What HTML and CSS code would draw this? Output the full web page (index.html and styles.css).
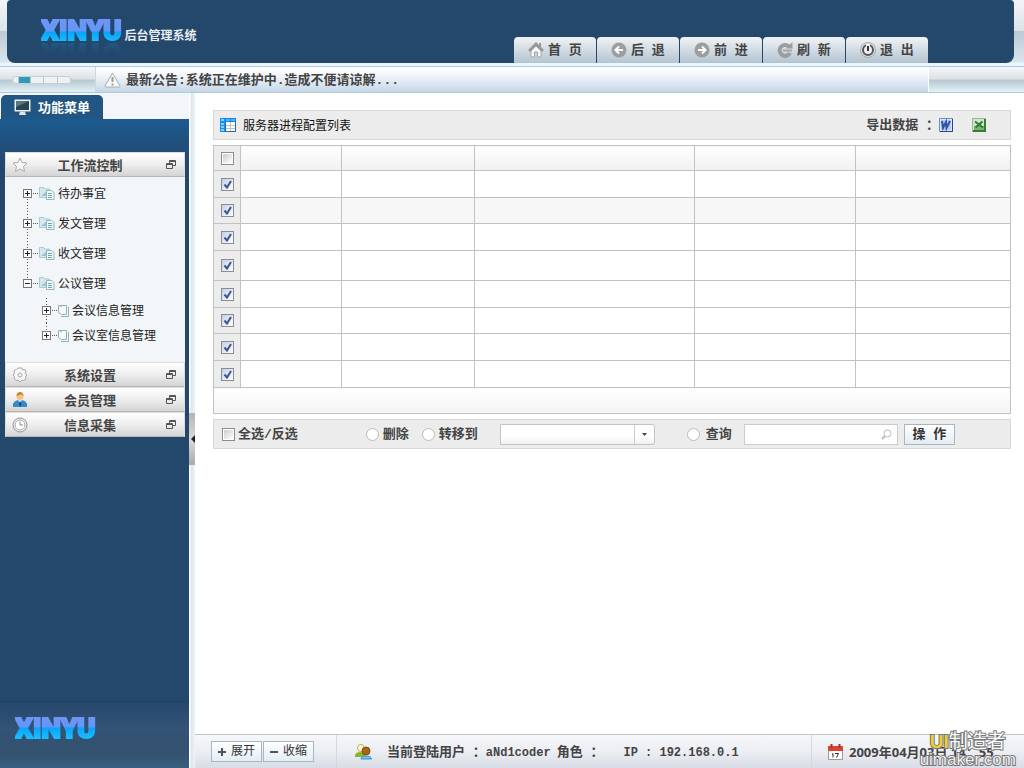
FILE: index.html
```html
<!DOCTYPE html>
<html lang="zh-CN">
<head>
<meta charset="utf-8">
<title>后台管理系统</title>
<link rel="stylesheet" href="styles.css">
</head>
<body>
<header class="top">
  <div class="banner">
    <div class="brand"><span class="logo">XINYU</span><h1>后台管理系统</h1></div>
    <nav class="nav">
      <a href="#home"><svg width="16" height="16" viewBox="0 0 16 16"><path d="M8 0 0 8l2 2 6-6 6 6 2-2-3-3V1h-2v2z" fill="#999"/><path d="M3 9l5-5 5 5v6H9.500v-5h-3v5H3z" fill="#f8f8f8" stroke="#a5a5a5"/></svg><span>首 页</span></a>
      <a href="#back"><svg width="16" height="16" viewBox="0 0 16 16"><circle cx="8" cy="8" r="7.500" fill="#9b9d9f"/><path d="M12 8H5M8 4.500 4.500 8 8 11.500" fill="none" stroke="#fff" stroke-width="2"/></svg><span>后 退</span></a>
      <a href="#forward"><svg width="16" height="16" viewBox="0 0 16 16"><circle cx="8" cy="8" r="7.500" fill="#9b9d9f"/><path d="M4 8h7M8 4.500l3.500 3.500L8 11.500" fill="none" stroke="#fff" stroke-width="2"/></svg><span>前 进</span></a>
      <a href="#refresh"><svg width="16" height="16" viewBox="0 0 16 16"><path d="M12 4.500A5.500 5.500 0 1 0 13 11" fill="none" stroke="#9b9d9f" stroke-width="4"/><path d="M15.500 0v6.500H9z" fill="#9b9d9f"/><path d="M6 8.500h9" stroke="#a5a7a9" stroke-width="2"/></svg><span>刷 新</span></a>
      <a href="#exit"><svg width="16" height="16" viewBox="0 0 16 16"><circle cx="8" cy="8" r="7.500" fill="#ddd" stroke="#aaa"/><circle cx="8" cy="8" r="5" fill="#eee" stroke="#555" stroke-width="2"/><path d="M8 2v3" stroke="#eee" stroke-width="4"/><path d="M8 4v5" stroke="#333" stroke-width="2"/></svg><span>退 出</span></a>
    </nav>
  </div>
</header>
<div class="strip">
  <div class="strip-left"><div class="meter"><i></i><i></i><i></i><i></i><i></i></div></div>
  <div class="notice">
    <svg width="17" height="16" viewBox="0 0 17 16"><path d="M8.500 1 1 14q0 1 1 1h13q1 0 1-1z" fill="#fafafa" stroke="#aaa" stroke-linejoin="round"/><path d="M8.500 5v5M8.500 11.500v2" stroke="#999" stroke-width="2"/></svg>
    <p>最新公告:系统正在维护中.造成不便请谅解...</p>
  </div>
  <div class="strip-right"></div>
</div>
<div class="layout">
  <aside class="side">
    <div class="tabs"><div class="tab">
      <svg width="17" height="17" viewBox="0 0 17 17"><path d="M.5.5h16v12H.5z" fill="#e9eff2"/><path d="M2 2h13v9H2z" fill="#27464f"/><path d="M2 2h13L2 8z" fill="#58777d"/><path d="M6 12.500h5l1 3.500H5z" fill="#dfe6ea"/></svg>
      <h2>功能菜单</h2></div></div>
    <div class="side-body">
      <div class="menu">
        <button class="group"><svg width="16" height="16" viewBox="0 0 16 16"><path d="M8 1l2 4.500 5 .5-3.500 3.500 1 5L8 12l-4.500 2.500 1-5L1 6l5-.5z" fill="#f6f6f6" stroke="#aaa" stroke-linejoin="round"/></svg><span>工作流控制</span><svg class="win" width="10" height="9" viewBox="0 0 10 9"><path d="M3.500 4V.5h6v5H7M3.500 1.500h6M.5 3.500h6v5h-6zM.5 4.500h6" fill="none" stroke="#555"/></svg></button>
        <ul class="tree">
          <li><div class="node"><button class="exp" aria-label="展开"></button><i class="dots"></i><svg width="16" height="14" viewBox="0 0 16 14"><path d="M.5 11.500v-10h4l1 1.500h5v8.500z" fill="#d5e9ee" stroke="#a4cbd5"/><path d="M2 10l6-5v5z" fill="#9fc2d0"/><path d="M7.500 4.500h5l2.500 2v7H7.500z" fill="#f5fafa" stroke="#8fb8bd"/><path d="M9 7.500h4M9 9.500h4M9 11.500h4" stroke="#6fa6a8"/></svg><a href="#todo">待办事宜</a></div></li>
          <li><div class="node"><button class="exp" aria-label="展开"></button><i class="dots"></i><svg width="16" height="14" viewBox="0 0 16 14"><path d="M.5 11.500v-10h4l1 1.500h5v8.500z" fill="#d5e9ee" stroke="#a4cbd5"/><path d="M2 10l6-5v5z" fill="#9fc2d0"/><path d="M7.500 4.500h5l2.500 2v7H7.500z" fill="#f5fafa" stroke="#8fb8bd"/><path d="M9 7.500h4M9 9.500h4M9 11.500h4" stroke="#6fa6a8"/></svg><a href="#out">发文管理</a></div></li>
          <li><div class="node"><button class="exp" aria-label="展开"></button><i class="dots"></i><svg width="16" height="14" viewBox="0 0 16 14"><path d="M.5 11.500v-10h4l1 1.500h5v8.500z" fill="#d5e9ee" stroke="#a4cbd5"/><path d="M2 10l6-5v5z" fill="#9fc2d0"/><path d="M7.500 4.500h5l2.500 2v7H7.500z" fill="#f5fafa" stroke="#8fb8bd"/><path d="M9 7.500h4M9 9.500h4M9 11.500h4" stroke="#6fa6a8"/></svg><a href="#in">收文管理</a></div></li>
          <li><div class="node"><button class="exp open" aria-label="收缩"></button><i class="dots"></i><svg width="16" height="14" viewBox="0 0 16 14"><path d="M.5 11.500v-10h4l1 1.500h5v8.500z" fill="#d5e9ee" stroke="#a4cbd5"/><path d="M2 10l6-5v5z" fill="#9fc2d0"/><path d="M7.500 4.500h5l2.500 2v7H7.500z" fill="#f5fafa" stroke="#8fb8bd"/><path d="M9 7.500h4M9 9.500h4M9 11.500h4" stroke="#6fa6a8"/></svg><a href="#meeting">公议管理</a></div>
            <ul class="subtree">
              <li><div class="node"><button class="exp" aria-label="展开"></button><i class="dots"></i><svg width="11" height="12" viewBox="0 0 11 12"><path d="M3 2.500V.5M3 11.500h7.500V2M.5.500h8v9h-5l-3-2z" fill="#f6fafa" stroke="#8fb0b4"/></svg><a href="#info">会议信息管理</a></div></li>
              <li><div class="node"><button class="exp" aria-label="展开"></button><i class="dots"></i><svg width="11" height="12" viewBox="0 0 11 12"><path d="M3 2.500V.5M3 11.500h7.500V2M.5.500h8v9h-5l-3-2z" fill="#f6fafa" stroke="#8fb0b4"/></svg><a href="#room">会议室信息管理</a></div></li>
            </ul>
          </li>
        </ul>
        <button class="group"><svg width="16" height="16" viewBox="0 0 16 16"><path d="M6 1h4l.5 2L13 2.500 14 5l-1 1.500 2 1.500-1.500 2 .5 2-2.500 1.500-1.500-.5L8 15l-2-2-2 .5L2 11l.5-1.500L1 8l1.500-2L2 3.500 4.500 2.500z" fill="#f6f6f6" stroke="#aaa"/><circle cx="8" cy="8" r="2" fill="none" stroke="#aaa"/></svg><span>系统设置</span><svg class="win" width="10" height="9" viewBox="0 0 10 9"><path d="M3.500 4V.5h6v5H7M3.500 1.500h6M.5 3.500h6v5h-6zM.5 4.500h6" fill="none" stroke="#555"/></svg></button>
        <button class="group"><svg width="16" height="16" viewBox="0 0 16 16"><path d="M1 15v-3q1-3 5-4h4q4 1 5 4v3z" fill="#328ac8"/><path d="M6 8h4l-2 3z" fill="#d4ecfa"/><path d="M8 9l1.500 3L8 15l-1-3z" fill="#15416c"/><circle cx="8" cy="4.500" r="3.500" fill="#f3c583"/><path d="M4.500 4q0-4 3.500-4t3.500 4l-2-1.500z" fill="#c68a3b"/></svg><span>会员管理</span><svg class="win" width="10" height="9" viewBox="0 0 10 9"><path d="M3.500 4V.5h6v5H7M3.500 1.500h6M.5 3.500h6v5h-6zM.5 4.500h6" fill="none" stroke="#555"/></svg></button>
        <button class="group"><svg width="16" height="16" viewBox="0 0 16 16"><circle cx="8" cy="8" r="7" fill="#eee" stroke="#999"/><circle cx="8" cy="8" r="5" fill="#fff" stroke="#aaa"/><path d="M8 4.500V8h3" fill="none" stroke="#888"/></svg><span>信息采集</span><svg class="win" width="10" height="9" viewBox="0 0 10 9"><path d="M3.500 4V.5h6v5H7M3.500 1.500h6M.5 3.500h6v5h-6zM.5 4.500h6" fill="none" stroke="#555"/></svg></button>
      </div>
    </div>
    <div class="side-foot"><span class="logo">XINYU</span></div>
  </aside>
  <div class="splitter"><button class="handle" aria-label="收起菜单"><svg width="4" height="8" viewBox="0 0 4 8"><path d="M4 0v8L0 4z" fill="#222"/></svg></button></div>
  <div class="right">
    <main class="content">
      <div class="bar">
        <svg width="16" height="14" viewBox="0 0 16 14"><path d="M0 0h16v14H0z" fill="#2b69ad"/><path d="M0 0h16v4H0z" fill="#1581ea"/><path d="M0 0h5v14H0z" fill="#1690f4"/><path d="M1 5h3v2H1zm0 3h3v2H1zm0 3h3v2H1zM1 1h3v2H1z" fill="#7fd0ff"/><path d="M6 1h4v2H6zm5 0h4v2h-4z" fill="#53b4ff"/><path d="M6 4h9v9H6z" fill="#fff"/><path d="M6 7.500h9M6 10.500h9M10.500 4v9" stroke="#b9c3cc"/></svg>
        <h3>服务器进程配置列表</h3>
        <div class="export"><span>导出数据 ：</span>
          <button aria-label="Word"><svg width="14" height="14" viewBox="0 0 14 14"><path d="M.5.500h13v13H.5z" fill="#dce7fa" stroke="#6d8cc8"/><path d="M2 2h10v10H2z" fill="#b9cdf2"/><path d="M3 3l1 7 3-6 .5 6L11 3" fill="none" stroke="#2f55ab" stroke-width="2"/><path d="M13.500 1v12.500H1" fill="none" stroke="#27458b"/></svg></button>
          <button aria-label="Excel"><svg width="14" height="14" viewBox="0 0 14 14"><path d="M.5.500h13v13H.5z" fill="#cde5c8" stroke="#8fbf89"/><path d="M2 8h10v4H2z" fill="#79b472"/><path d="M3 3.500l8 6M10.500 3.500l-7 6" stroke="#2f7a32" stroke-width="2"/><path d="M13 1v12H1" fill="none" stroke="#3b7a3c" stroke-width="2"/></svg></button>
        </div>
      </div>
      <table class="grid">
        <colgroup><col class="c0"><col class="c1"><col class="c2"><col class="c3"><col class="c4"><col></colgroup>
        <thead><tr><th><input type="checkbox" aria-label="全选"></th><th></th><th></th><th></th><th></th><th></th></tr></thead>
        <tbody>
          <tr><td><input type="checkbox" checked aria-label="第1行"></td><td></td><td></td><td></td><td></td><td></td></tr>
          <tr class="alt"><td><input type="checkbox" checked aria-label="第2行"></td><td></td><td></td><td></td><td></td><td></td></tr>
          <tr><td><input type="checkbox" checked aria-label="第3行"></td><td></td><td></td><td></td><td></td><td></td></tr>
          <tr class="tall"><td><input type="checkbox" checked aria-label="第4行"></td><td></td><td></td><td></td><td></td><td></td></tr>
          <tr><td><input type="checkbox" checked aria-label="第5行"></td><td></td><td></td><td></td><td></td><td></td></tr>
          <tr class="short"><td><input type="checkbox" checked aria-label="第6行"></td><td></td><td></td><td></td><td></td><td></td></tr>
          <tr><td><input type="checkbox" checked aria-label="第7行"></td><td></td><td></td><td></td><td></td><td></td></tr>
          <tr><td><input type="checkbox" checked aria-label="第8行"></td><td></td><td></td><td></td><td></td><td></td></tr>
        </tbody>
        <tfoot><tr><td colspan="6"></td></tr></tfoot>
      </table>
      <form class="bar actions">
        <label class="all"><input type="checkbox"><span>全选/反选</span></label>
        <label class="del"><input type="radio" name="op"><span>删除</span></label>
        <label class="move"><input type="radio" name="op"><span>转移到</span></label>
        <select aria-label="转移到"><option></option></select>
        <label class="find"><input type="radio" name="op"><span>查询</span></label>
        <input class="search" type="text" aria-label="查询">
        <button class="btn go" type="button">操 作</button>
      </form>
    </main>
    <footer class="foot">
      <div class="foot-btns">
        <button class="btn"><svg width="8" height="8" viewBox="0 0 8 8"><path d="M0 4h8M4 0v8" stroke="#4a5563" stroke-width="2"/></svg>展开</button>
        <button class="btn"><svg width="8" height="8" viewBox="0 0 8 8"><path d="M0 4h8" stroke="#4a5563" stroke-width="2"/></svg>收缩</button>
      </div>
      <div class="user">
        <svg width="17" height="16" viewBox="0 0 17 16"><path d="M0 11q1-3 5-3t5 3v2H0z" fill="#8db52c"/><circle cx="6" cy="4" r="3.500" fill="#fffbe0" stroke="#c8a347"/><circle cx="11" cy="7" r="4" fill="#a9680f" stroke="#7f4e10"/><path d="M6 15q0-3 5-3t5.500 3z" fill="#6cc6f2" stroke="#3a93cc"/></svg>
        <span>当前登陆用户 ：</span><span class="mono name">aNd1coder</span><span class="role">角色 ：</span><span class="mono">IP : 192.168.0.1</span>
      </div>
      <div class="date">
        <svg width="15" height="16" viewBox="0 0 15 16"><path d="M.5 4h14v11.500H.5z" fill="#fff" stroke="#999"/><path d="M0 2h15v5H0z" fill="#d8462f"/><path d="M3.500 0v4M11.500 0v4" stroke="#a33" stroke-width="2"/><path d="M5 9.500v4M4 10h1M7 9.500h3.500L8.500 13.500" fill="none" stroke="#333"/></svg>
        <time datetime="2009-04-03T14:55">2009年04月03日 14：55</time>
      </div>
    </footer>
  </div>
</div>
<div class="mark"><div class="mark-top"><b>UI</b>制造者</div><div class="mark-url">uimaker.com</div></div>
</body>
</html>
```
FILE: styles.css
```css
* { box-sizing: border-box; }
body {
  margin: 0;
  min-height: 100vh;
  display: flex;
  flex-direction: column;
  font-family: "Liberation Sans", "Noto Sans CJK SC", sans-serif;
  font-size: 13px;
  line-height: 20px;
  color: #444;
  background: #fff;
}
h1, h2, h3, p, ul { margin: 0; padding: 0; font-size: inherit; }
ul { list-style: none; }
a { color: inherit; text-decoration: none; }
button, input, select { font: inherit; color: inherit; margin: 0; }
svg { flex: none; display: block; }

.top {
  padding: 0 10px 3px 7px;
  background: linear-gradient(#f2f5f6, #dbe3ea 31px, #bcc8d4 31px, #dbe5ee 62px, #e8f6ff 63px);
}
.banner {
  display: flex;
  justify-content: space-between;
  height: 63px;
  padding: 0 86px 0 34px;
  background: #24476c;
  border-radius: 4px 4px 8px 8px;
}
.brand { display: flex; align-items: flex-start; gap: 3px; padding-top: 16px; }
.brand h1 { padding-top: 10px; font-size: 12px; color: #e8eef4; }
.logo {
  font-family: Roboto, sans-serif;
  font-weight: 900;
  font-size: 28px;
  line-height: 30px;
  color: transparent;
  background: linear-gradient(#6e95f5 5px, #6297f8 15px, #08a4fb 16px, #1bbcff 26px);
  background-clip: text;
  -webkit-background-clip: text;
  -webkit-text-stroke: 2px transparent;
  -webkit-box-reflect: below -8px linear-gradient(transparent 40%, rgba(0, 0, 0, .2));
}
.nav { display: flex; gap: 1px; align-items: flex-end; }
.nav a {
  display: flex;
  align-items: center;
  gap: 4px;
  width: 82px;
  height: 26px;
  padding-left: 14px;
  font-weight: bold;
  background: linear-gradient(#f0f3f5, #b3c4d1);
  border-radius: 4px 4px 0 0;
}
.nav a, .notice, .export, .actions, .foot {
  font-family: "Liberation Mono", "Noto Sans CJK SC", monospace;
}
.nav span, .notice p, .tab h2, .export span, .actions span, .user span { padding-top: 2px; }

.strip {
  display: flex;
  height: 27px;
  border-top: 1px solid #b3c8d6;
  border-bottom: 1px solid #b3c8d6;
}
.strip-left, .strip-right {
  width: 95px;
  background: linear-gradient(#f5f6f7, #dde2e7 12px, #b8c8d1 13px, #e1f2f8);
}
.strip-left { display: flex; align-items: center; padding-left: 12px; }
.meter { display: flex; width: 60px; height: 8px; border: 1px solid #c5cfd4; border-radius: 4px; background: #edf1f3; overflow: hidden; }
.meter i { width: 15px; border-right: 1px solid #b9c4ca; }
.meter i:first-child { width: 7px; }
.meter i:nth-child(2) { background: #2b9dba; width: 13px; }
.notice {
  flex: 1;
  display: flex;
  align-items: center;
  gap: 5px;
  padding-left: 8px;
  font-weight: bold;
  background: linear-gradient(#fff, #f4f7fb 30%, #c5d7e8);
  border-left: 1px solid #c9d8e3;
  border-right: 1px solid #fff;
}

.layout { flex: 1; display: flex; }
.side { width: 189px; display: flex; flex-direction: column; background: #24476c; }
.tabs { height: 26px; padding: 2px 0 0 1px; background: #f4f5f9; }
.tab {
  display: flex;
  align-items: center;
  gap: 7px;
  width: 102px;
  height: 24px;
  padding-left: 13px;
  color: #fff;
  background: #215582;
  border-radius: 5px 5px 0 0;
}
.side-body { flex: 1; padding: 33px 4px 0 5px; background: linear-gradient(#1c5b90, #24476c 45px); }
.menu { background: #f2f6f9; }
.group {
  display: grid;
  grid-template-columns: 16px 1fr 10px;
  align-items: center;
  width: 100%;
  height: 25px;
  padding: 0 8px 0 6px;
  font-weight: bold;
  border: 1px solid #ddd;
  border-bottom-color: #b5b5b5;
  background: linear-gradient(#fff, #eee 50%, #d4d4d4);
}
.group span { padding: 2px 14px 0 0; }
.tree { height: 185px; padding: 1px 0 0 18px; color: #222; font-size: 12px; }
.tree li {
  background: repeating-linear-gradient(#555 0 1px, transparent 1px 3px) 4px 0 / 1px 100% no-repeat;
}
.tree > li:first-child { background-position: 4px 15px; }
.tree > li:last-child { background-size: 1px 12px; }
.node { display: flex; align-items: center; height: 30px; }
.node a { padding: 2px 0 0 3px; }
.exp {
  width: 9px;
  height: 9px;
  padding: 0;
  border: 1px solid #777;
  background: linear-gradient(#222, #222) center / 5px 1px no-repeat, linear-gradient(#222, #222) center / 1px 5px no-repeat, #fff;
}
.exp.open { background: linear-gradient(#222, #222) center / 5px 1px no-repeat, #fff; }
.dots { width: 7px; height: 1px; background: repeating-linear-gradient(90deg, transparent 0 1px, #555 1px 2px); }
.subtree { padding-left: 19px; }
.subtree .node { height: 25px; }
.subtree .node a { padding-top: 0; }
.subtree li:last-child { background-size: 1px 12px; }
.side-foot {
  height: 67px;
  padding: 12px 15px;
  border-top: 1px solid #1f4063;
  background: linear-gradient(#24476c, #345375 40%, #33526f 80%, #38607f);
}
.splitter {
  display: flex;
  width: 6px;
  background: linear-gradient(90deg, #fff 1px, #dbe5ed 2px, #eef3f7);
}
.handle {
  display: flex;
  align-items: center;
  justify-content: flex-end;
  width: 6px;
  height: 52px;
  margin-top: 320px;
  padding: 0;
  border: 0;
  background: linear-gradient(#b4b4b4, #dadada 50%, #aaa);
}

.right { flex: 1; min-width: 0; display: flex; flex-direction: column; }
.content { flex: 1; display: flex; flex-direction: column; gap: 5px; padding: 17px 13px 20px 18px; }
.bar {
  display: flex;
  align-items: center;
  height: 30px;
  padding: 0 8px 0 6px;
  background: #ececec;
  border: 1px solid #d8d8d8;
}
.bar h3 { flex: 1; padding: 2px 0 0 7px; font-size: 12px; font-weight: normal; color: #111; }
.export { display: flex; align-items: center; padding-right: 16px; font-weight: bold; }
.export button { padding: 0; border: 0; background: none; }
.export button + button { margin-left: 19px; }

.grid { width: 100%; table-layout: fixed; border-collapse: collapse; }
.grid th, .grid td { height: 27px; padding: 0; border: 1px solid #c2c2c2; }
.grid .c0 { width: 27px; }
.grid .c1 { width: 12.7%; }
.grid .c2 { width: 16.6%; }
.grid .c3 { width: 27.65%; }
.grid .c4 { width: 20.2%; }
.grid th { height: 25px; background: linear-gradient(#fff, #f0f0f0); }
.grid .alt td, .grid .short td { height: 26px; }
.grid .alt td { background: #f7f7f7; }
.grid .tall td { height: 30px; }
.grid th:first-child, .grid tbody td:first-child { background: #ececec; text-align: center; }
.grid tfoot td { height: 26px; background: linear-gradient(#fff, #f3f3f3); }
.grid input { display: block; margin: 0 auto; }

input[type="checkbox"] {
  appearance: none;
  width: 13px;
  height: 13px;
  border: 1px solid #8a8e94;
  background: linear-gradient(135deg, #ccc, #fff) content-box, #fff;
  padding: 1px;
}
input[type="checkbox"]:checked {
  background: url("data:image/svg+xml,%3Csvg xmlns='http://www.w3.org/2000/svg' viewBox='0 0 9 9'%3E%3Cpath d='M1.500 4.500 4 7.500 8 1' fill='none' stroke='%233a5593' stroke-width='2'/%3E%3C/svg%3E") center / 9px 9px no-repeat, linear-gradient(135deg, #c3cfe6, #fff);
}
input[type="radio"] {
  appearance: none;
  width: 13px;
  height: 13px;
  border: 1px solid #bbb;
  border-radius: 50%;
  background: #fff;
}
input[type="radio"]:checked { background: radial-gradient(#3a5593 3px, #fff 4px); }
.actions { padding-left: 8px; font-weight: bold; }
.actions label { display: flex; align-items: center; gap: 4px; white-space: nowrap; }
.actions .all { gap: 3px; margin-right: 68px; }
.actions .del { margin-right: 13px; }
.actions .find { margin: 0 12px 0 32px; gap: 6px; }
.actions select {
  appearance: none;
  width: 155px;
  height: 21px;
  margin-left: 22px;
  border: 1px solid #c0c4c8;
  border-radius: 0 3px 3px 0;
  background: url("data:image/svg+xml,%3Csvg xmlns='http://www.w3.org/2000/svg' viewBox='0 0 20 19'%3E%3Cpath d='M.5 0v19' stroke='%23ccc'/%3E%3Cpath d='M8 8h5l-2.500 3z' fill='%23444'/%3E%3C/svg%3E") right / 20px 19px no-repeat, linear-gradient(#fff, #fff 60%, #f0f0f0);
}
.search {
  width: 154px;
  height: 21px;
  padding: 0 20px 0 4px;
  border: 1px solid #c9ccd0;
  background: url("data:image/svg+xml,%3Csvg xmlns='http://www.w3.org/2000/svg' viewBox='0 0 11 11'%3E%3Ccircle cx='6.500' cy='4.500' r='3.500' fill='none' stroke='%23bbb'/%3E%3Cpath d='M4 7 1 10' stroke='%23bbb' stroke-width='2'/%3E%3C/svg%3E") right 5px center / 11px 11px no-repeat, #fff;
}
.btn {
  display: flex;
  align-items: center;
  justify-content: center;
  gap: 5px;
  width: 51px;
  height: 21px;
  padding: 0;
  font-size: 12px;
  font-weight: normal;
  white-space: nowrap;
  color: #333;
  border: 1px solid #a9b6c0;
  background: linear-gradient(#fff, #e4edf4);
}
.go { margin-left: 6px; padding-top: 2px; font-size: 13px; font-weight: bold; }

.foot {
  display: flex;
  height: 34px;
  border-top: 1px solid #c0c3c8;
  background: linear-gradient(#f6f7fa, #eceef3 50%, #d8dce5);
  font-weight: bold;
  white-space: nowrap;
}
.foot-btns { display: flex; align-items: center; gap: 1px; width: 142px; padding-left: 16px; border-right: 1px solid #d5d8df; }
.user { flex: 1; display: flex; align-items: center; padding-left: 18px; }
.user svg { margin-right: 15px; }
.mono { font-size: 12px; white-space: pre; }
.name { margin-right: 6px; }
.role { margin-right: 20px; }
.date { display: flex; align-items: center; gap: 6px; width: 213px; padding-left: 16px; border-left: 1px solid #d5d8df; font-family: "Noto Sans", "Noto Sans CJK SC", sans-serif; }

.mark {
  position: absolute;
  right: 8px;
  bottom: 0;
  text-align: center;
  color: #fff;
  paint-order: stroke fill;
  -webkit-text-stroke: 2px #777;
  pointer-events: none;
}
.mark-top { font-size: 19px; line-height: 18px; }
.mark-top b { color: #e8cf35; }
.mark-url { font-size: 17px; line-height: 17px; color: #eee; }
```
